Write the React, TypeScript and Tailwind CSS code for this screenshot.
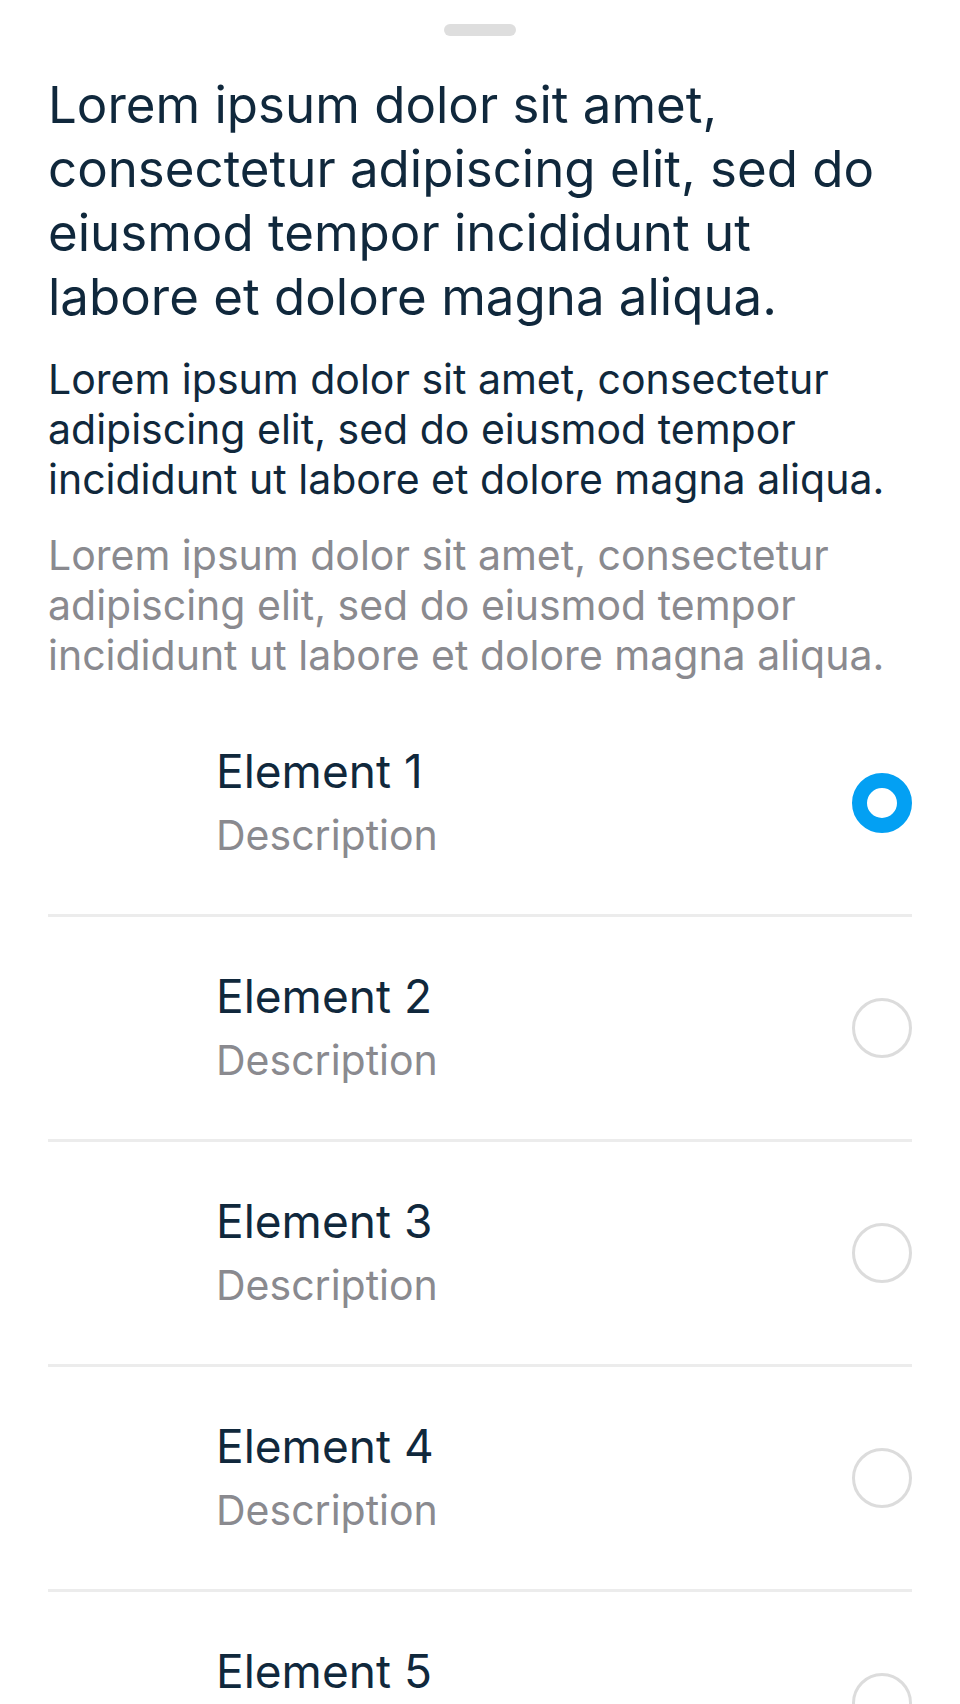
import React from "react";

const items = [
  { title: "Element 1", selected: true },
  { title: "Element 2", selected: false },
  { title: "Element 3", selected: false },
  { title: "Element 4", selected: false },
  { title: "Element 5", selected: false },
];

function Radio({ selected }: { selected: boolean }) {
  return selected ? (
    <div className="w-[60px] h-[60px] shrink-0 rounded-full border-[15px] border-[#03a0f3] bg-white" />
  ) : (
    <div className="w-[60px] h-[60px] shrink-0 rounded-full border-[3px] border-[#dcdcdc] bg-white" />
  );
}

export default function App() {
  return (
    <div
      className="w-[960px] min-h-[1704px] bg-white px-12 flex flex-col"
      style={{ fontFamily: "Inter, 'Noto Sans', sans-serif" }}
    >
      <div className="flex justify-center pt-6">
        <div className="w-[72px] h-3 rounded-full bg-[#dedede]" />
      </div>

      <h1 className="mt-[37px] text-[51px] leading-[64px] font-normal text-[#10283c]">
        Lorem ipsum dolor sit amet,
        <br />
        consectetur adipiscing elit, sed do
        <br />
        eiusmod tempor incididunt ut
        <br />
        labore et dolore magna aliqua.
      </h1>

      <p className="mt-[25px] text-[41px] leading-[50px] text-[#10283c]">
        Lorem ipsum dolor sit amet, consectetur
        <br />
        adipiscing elit, sed do eiusmod tempor
        <br />
        incididunt ut labore et dolore magna aliqua.
      </p>

      <p className="mt-[26px] text-[41px] leading-[50px] text-[#8a8a8f]">
        Lorem ipsum dolor sit amet, consectetur
        <br />
        adipiscing elit, sed do eiusmod tempor
        <br />
        incididunt ut labore et dolore magna aliqua.
      </p>

      <div className="mt-3 flex flex-col">
        {items.map((it) => (
          <div
            key={it.title}
            className="h-[225px] flex items-center border-b-[3px] border-[#ececec]"
          >
            <div className="w-[168px] shrink-0" />
            <div className="flex-1 flex flex-col pb-1">
              <div className="text-[46px] leading-[56px] text-[#10283c]">
                {it.title}
              </div>
              <div className="mt-3 text-[41px] leading-[48px] text-[#8a8a8f]">
                Description
              </div>
            </div>
            <Radio selected={it.selected} />
          </div>
        ))}
      </div>
    </div>
  );
}
